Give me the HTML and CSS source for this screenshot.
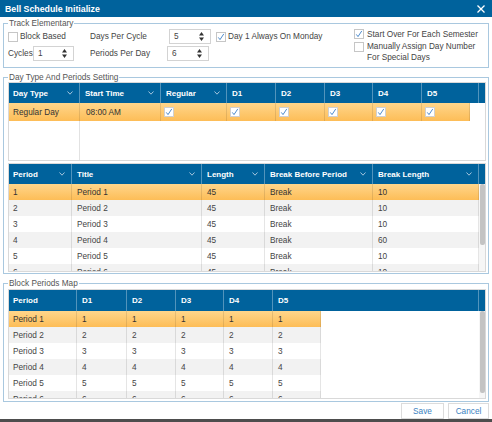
FILE: index.html
```html
<!DOCTYPE html>
<html>
<head>
<meta charset="utf-8">
<link rel="stylesheet" href="styles.css">
</head>
<body>
<div class="dialog">
  <div class="titlebar">
    <span class="title">Bell Schedule Initialize</span>
    <svg class="close" viewBox="0 0 8 8"><path d="M0.5 0.5 L7.5 7.5 M7.5 0.5 L0.5 7.5" stroke="#fff" stroke-width="1.3" fill="none"/></svg>
  </div>

  <fieldset class="fs fs-track">
    <legend>Track Elementary</legend>
    <div class="track">
      <div class="col col-a">
        <div class="row"><span class="cb"></span><span>Block Based</span></div>
        <div class="row row2"><span class="lbl-cycles">Cycles</span><span class="spin spin-sm"><span>1</span><svg class="arrows" viewBox="0 0 5 9"><polygon points="0,3.6 2.5,0 5,3.6" fill="#333"/><polygon points="0,5.4 2.5,9 5,5.4" fill="#333"/></svg></span></div>
      </div>
      <div class="col col-b">
        <div class="row"><span class="lbl">Days Per Cycle</span><span class="spin"><span>5</span><svg class="arrows" viewBox="0 0 5 9"><polygon points="0,3.6 2.5,0 5,3.6" fill="#333"/><polygon points="0,5.4 2.5,9 5,5.4" fill="#333"/></svg></span></div>
        <div class="row row2"><span class="lbl">Periods Per Day</span><span class="spin"><span>6</span><svg class="arrows" viewBox="0 0 5 9"><polygon points="0,3.6 2.5,0 5,3.6" fill="#333"/><polygon points="0,5.4 2.5,9 5,5.4" fill="#333"/></svg></span></div>
      </div>
      <div class="col col-c">
        <div class="row"><span class="cb"><svg viewBox="0 0 8 8"><path d="M1.3 4.4 L3 6.6 L6.8 0.9" stroke="#3b7fc6" stroke-width="0.9" fill="none"/></svg></span><span>Day 1 Always On Monday</span></div>
      </div>
      <div class="col col-d">
        <div class="row"><span class="cb"><svg viewBox="0 0 8 8"><path d="M1.3 4.4 L3 6.6 L6.8 0.9" stroke="#3b7fc6" stroke-width="0.9" fill="none"/></svg></span><span>Start Over For Each Semester</span></div>
        <div class="row-multi"><span class="cb cb-top"></span><span class="multi">Manually Assign Day Number<br>For Special Days</span></div>
      </div>
    </div>
  </fieldset>

  <fieldset class="fs fs-days">
    <legend>Day Type And Periods Setting</legend>
    <div class="grid g1">
      <div class="ghead">
        <div class="hc">Day Type<svg class="chev" viewBox="0 0 6 4"><polyline points="0.5,0.5 3,3.2 5.5,0.5" fill="none" stroke="#b7d0e4" stroke-width="0.9"/></svg></div>
        <div class="hc">Start Time<svg class="chev" viewBox="0 0 6 4"><polyline points="0.5,0.5 3,3.2 5.5,0.5" fill="none" stroke="#b7d0e4" stroke-width="0.9"/></svg></div>
        <div class="hc">Regular<svg class="chev" viewBox="0 0 6 4"><polyline points="0.5,0.5 3,3.2 5.5,0.5" fill="none" stroke="#b7d0e4" stroke-width="0.9"/></svg></div>
        <div class="hc">D1</div>
        <div class="hc">D2</div>
        <div class="hc">D3</div>
        <div class="hc">D4</div>
        <div class="hc">D5</div>
        <div class="hc gut"></div>
      </div>
      <div class="gbody g1body">
        <div class="rows">
          <div class="grow sel r18">
            <div class="c">Regular Day</div>
            <div class="c">08:00 AM</div>
            <div class="c"><span class="cb cb-s"><svg viewBox="0 0 8 8"><path d="M1.3 4.4 L3 6.6 L6.8 0.9" stroke="#3b7fc6" stroke-width="0.9" fill="none"/></svg></span></div>
            <div class="c"><span class="cb cb-s"><svg viewBox="0 0 8 8"><path d="M1.3 4.4 L3 6.6 L6.8 0.9" stroke="#3b7fc6" stroke-width="0.9" fill="none"/></svg></span></div>
            <div class="c"><span class="cb cb-s"><svg viewBox="0 0 8 8"><path d="M1.3 4.4 L3 6.6 L6.8 0.9" stroke="#3b7fc6" stroke-width="0.9" fill="none"/></svg></span></div>
            <div class="c"><span class="cb cb-s"><svg viewBox="0 0 8 8"><path d="M1.3 4.4 L3 6.6 L6.8 0.9" stroke="#3b7fc6" stroke-width="0.9" fill="none"/></svg></span></div>
            <div class="c"><span class="cb cb-s"><svg viewBox="0 0 8 8"><path d="M1.3 4.4 L3 6.6 L6.8 0.9" stroke="#3b7fc6" stroke-width="0.9" fill="none"/></svg></span></div>
            <div class="c"><span class="cb cb-s"><svg viewBox="0 0 8 8"><path d="M1.3 4.4 L3 6.6 L6.8 0.9" stroke="#3b7fc6" stroke-width="0.9" fill="none"/></svg></span></div>
          </div>
        </div>
      </div>
    </div>

    <div class="grid g2">
      <div class="ghead">
        <div class="hc">Period<svg class="chev" viewBox="0 0 6 4"><polyline points="0.5,0.5 3,3.2 5.5,0.5" fill="none" stroke="#b7d0e4" stroke-width="0.9"/></svg></div>
        <div class="hc">Title<svg class="chev" viewBox="0 0 6 4"><polyline points="0.5,0.5 3,3.2 5.5,0.5" fill="none" stroke="#b7d0e4" stroke-width="0.9"/></svg></div>
        <div class="hc">Length<svg class="chev" viewBox="0 0 6 4"><polyline points="0.5,0.5 3,3.2 5.5,0.5" fill="none" stroke="#b7d0e4" stroke-width="0.9"/></svg></div>
        <div class="hc">Break Before Period<svg class="chev" viewBox="0 0 6 4"><polyline points="0.5,0.5 3,3.2 5.5,0.5" fill="none" stroke="#b7d0e4" stroke-width="0.9"/></svg></div>
        <div class="hc">Break Length<svg class="chev" viewBox="0 0 6 4"><polyline points="0.5,0.5 3,3.2 5.5,0.5" fill="none" stroke="#b7d0e4" stroke-width="0.9"/></svg></div>
        <div class="hc gut"></div>
      </div>
      <div class="gbody">
        <div class="rows">
          <div class="grow sel"><div class="c">1</div><div class="c">Period 1</div><div class="c">45</div><div class="c">Break</div><div class="c">10</div></div>
          <div class="grow alt"><div class="c">2</div><div class="c">Period 2</div><div class="c">45</div><div class="c">Break</div><div class="c">10</div></div>
          <div class="grow"><div class="c">3</div><div class="c">Period 3</div><div class="c">45</div><div class="c">Break</div><div class="c">10</div></div>
          <div class="grow alt"><div class="c">4</div><div class="c">Period 4</div><div class="c">45</div><div class="c">Break</div><div class="c">60</div></div>
          <div class="grow"><div class="c">5</div><div class="c">Period 5</div><div class="c">45</div><div class="c">Break</div><div class="c">10</div></div>
          <div class="grow alt"><div class="c">6</div><div class="c">Period 6</div><div class="c">45</div><div class="c">Break</div><div class="c">10</div></div>
        </div>
        <div class="vs"><div class="thumb t2"></div></div>
      </div>
    </div>
  </fieldset>

  <fieldset class="fs fs-block">
    <legend>Block Periods Map</legend>
    <div class="grid g3">
      <div class="ghead">
        <div class="hc">Period</div>
        <div class="hc">D1</div>
        <div class="hc">D2</div>
        <div class="hc">D3</div>
        <div class="hc">D4</div>
        <div class="hc">D5</div>
        <div class="hc gut"></div>
      </div>
      <div class="gbody">
        <div class="rows">
          <div class="grow sel"><div class="c">Period 1</div><div class="c">1</div><div class="c">1</div><div class="c">1</div><div class="c">1</div><div class="c">1</div></div>
          <div class="grow alt"><div class="c">Period 2</div><div class="c">2</div><div class="c">2</div><div class="c">2</div><div class="c">2</div><div class="c">2</div></div>
          <div class="grow"><div class="c">Period 3</div><div class="c">3</div><div class="c">3</div><div class="c">3</div><div class="c">3</div><div class="c">3</div></div>
          <div class="grow alt"><div class="c">Period 4</div><div class="c">4</div><div class="c">4</div><div class="c">4</div><div class="c">4</div><div class="c">4</div></div>
          <div class="grow"><div class="c">Period 5</div><div class="c">5</div><div class="c">5</div><div class="c">5</div><div class="c">5</div><div class="c">5</div></div>
          <div class="grow alt"><div class="c">Period 6</div><div class="c">6</div><div class="c">6</div><div class="c">6</div><div class="c">6</div><div class="c">6</div></div>
        </div>
        <div class="vs"><div class="thumb t3"></div></div>
      </div>
    </div>
  </fieldset>

  <div class="footer">
    <button class="btn btn-save">Save</button>
    <button class="btn btn-cancel">Cancel</button>
  </div>
  <div class="bottom"></div>
</div>
</body>
</html>
```

FILE: styles.css
```css
html, body {
  margin: 0;
  padding: 0;
  background: #fff;
}
body {
  font-family: "Liberation Sans", Arial, sans-serif;
  font-size: 8.25px;
  color: #444;
}
.dialog {
  width: 492px;
  height: 422px;
  display: flex;
  flex-direction: column;
  overflow: hidden;
  background: #fff;
}
.titlebar {
  flex: none;
  height: 17px;
  background: #00629c;
  display: flex;
  align-items: center;
  justify-content: space-between;
  padding: 0 7px 0 5px;
  box-sizing: border-box;
}
.title {
  color: #fff;
  font-weight: bold;
  font-size: 8.8px;
}
.close {
  width: 8px;
  height: 8px;
  display: block;
}

/* fieldsets */
.fs {
  flex: none;
  margin: 0 3px;
  border: 1px solid #a9c8df;
  padding: 0 2px 0 4px;
  min-width: 0;
}
.fs legend {
  padding: 0 1px;
  margin: 0;
  font-size: 8.25px;
  line-height: 13px;
  color: #555;
}
.fs-track { padding-bottom: 6px; }
.fs-days { margin-top: 3px; padding-bottom: 1px; }
.fs-block { margin-top: 3px; padding-bottom: 2px; }

.track {
  margin-top: -1px;
  height: 32px;
  display: flex;
  color: #444;
}
.col { display: flex; flex-direction: column; flex: none; }
.col-a { width: 82px; }
.col-b { width: 126px; }
.col-c { width: 138px; }
.col-d { flex: 1; }
.row {
  height: 15px;
  display: flex;
  align-items: center;
  gap: 2px;
  white-space: nowrap;
}
.row2 { margin-top: 2px; gap: 0; }
.col-d .row { gap: 3px; }
.row-multi {
  margin-top: 2px;
  display: flex;
  align-items: flex-start;
  gap: 3px;
}
.multi { line-height: 11px; white-space: nowrap; }
.lbl-cycles { width: 25px; flex: none; }
.lbl { width: 77px; flex: none; }

.cb {
  width: 10px;
  height: 10px;
  box-sizing: border-box;
  border: 1px solid #c6c6c6;
  background: #fff;
  display: inline-flex;
  flex: none;
}
.cb svg { width: 8px; height: 8px; display: block; }
.cb-top { margin-top: 1px; }

.spin {
  width: 42px;
  height: 15px;
  box-sizing: border-box;
  border: 1px solid #d3d3d3;
  background: #fff;
  display: flex;
  align-items: center;
  justify-content: space-between;
  padding: 0 6px 0 4px;
  flex: none;
}
.spin-sm { width: 41px; }
.arrows { width: 5px; height: 9px; display: block; }

/* grids */
.grid {
  width: 478px;
  box-sizing: border-box;
  border: 1px solid #d9d9d9;
  background: #fff;
  overflow: hidden;
}
.g1 { margin-top: -2px; }
.g2 { margin-top: 2px; }
.g3 { margin-top: -1px; }
.ghead {
  display: grid;
  height: 20px;
  background: #00629c;
  color: #fff;
  font-weight: bold;
  font-size: 8px;
}
.g3 .ghead { height: 21px; }
.hc {
  display: flex;
  align-items: center;
  justify-content: space-between;
  padding: 0 6px 0 5px;
  border-right: 1px solid rgba(255, 255, 255, 0.32);
  white-space: nowrap;
  overflow: hidden;
  box-sizing: border-box;
}
.hc:first-child { padding-left: 4px; }
.hc.gut { border-right: 0; padding: 0; }
.chev { width: 6px; height: 4px; display: block; flex: none; }

.g1 .ghead { grid-template-columns: 71px 81px 66px 49px 49px 48px 49px 57px 1fr; }
.g2 .ghead { grid-template-columns: 63px 130px 63px 108px 106px 1fr; }
.g3 .ghead { grid-template-columns: 68px 50px 49px 48px 49px 206px 1fr; }

.gbody {
  height: 87px;
  display: flex;
  overflow: hidden;
}
.g1body {
  height: 57px;
  background: linear-gradient(to right, #fff 70px, #e2e2e2 70px, #e2e2e2 71px, #fff 71px);
}
.rows {
  flex: 1;
  min-width: 0;
  overflow: hidden;
}
.grow {
  display: grid;
  height: 16px;
  width: max-content;
  background: #fff;
}
.grow.alt { background: #f2f2f2; }
.grow.sel {
  background: linear-gradient(#ffd68b, #fdbd57);
  color: #333;
}
.grow.r18 { height: 18px; }
.g1 .grow { grid-template-columns: 71px 81px 66px 49px 49px 48px 49px 48px; }
.g2 .grow { grid-template-columns: 63px 130px 63px 108px 106px; }
.g3 .grow { grid-template-columns: 68px 50px 49px 48px 49px 48px; }
.c {
  display: flex;
  align-items: center;
  padding: 0 5px;
  border-right: 1px solid rgba(0, 0, 0, 0.1);
  white-space: nowrap;
  overflow: hidden;
  box-sizing: border-box;
}
.c:first-child { padding-left: 4px; }
.c .cb-s { border-color: #d0d0d0; }
.g1 .c { padding-left: 3px; }
.g1 .c:nth-child(1), .g1 .c:nth-child(2) { padding-left: 4px; }
.g1 .c:nth-child(2) { padding-left: 6px; }

.vs {
  width: 6px;
  flex: none;
  background: #f6f6f6;
}
.thumb {
  width: 5px;
  margin-left: 1px;
  background: #c3c3c3;
  border-radius: 2px;
}
.t2 { height: 61px; }
.t3 { height: 82px; }

/* footer */
.footer {
  flex: none;
  height: 17px;
  display: flex;
  justify-content: flex-end;
  gap: 4px;
  padding: 1px 3px 0 0;
  box-sizing: border-box;
}
.btn {
  height: 16px;
  border: 1px solid #dcdcdc;
  background: #fff;
  color: #3b7fc1;
  font-family: "Liberation Sans", Arial, sans-serif;
  font-size: 8.25px;
  padding: 0;
  margin: 0;
}
.btn-save { width: 43px; }
.btn-cancel { width: 41px; }
.bottom {
  flex: none;
  height: 3px;
  background: #4d4d4d;
}
```
